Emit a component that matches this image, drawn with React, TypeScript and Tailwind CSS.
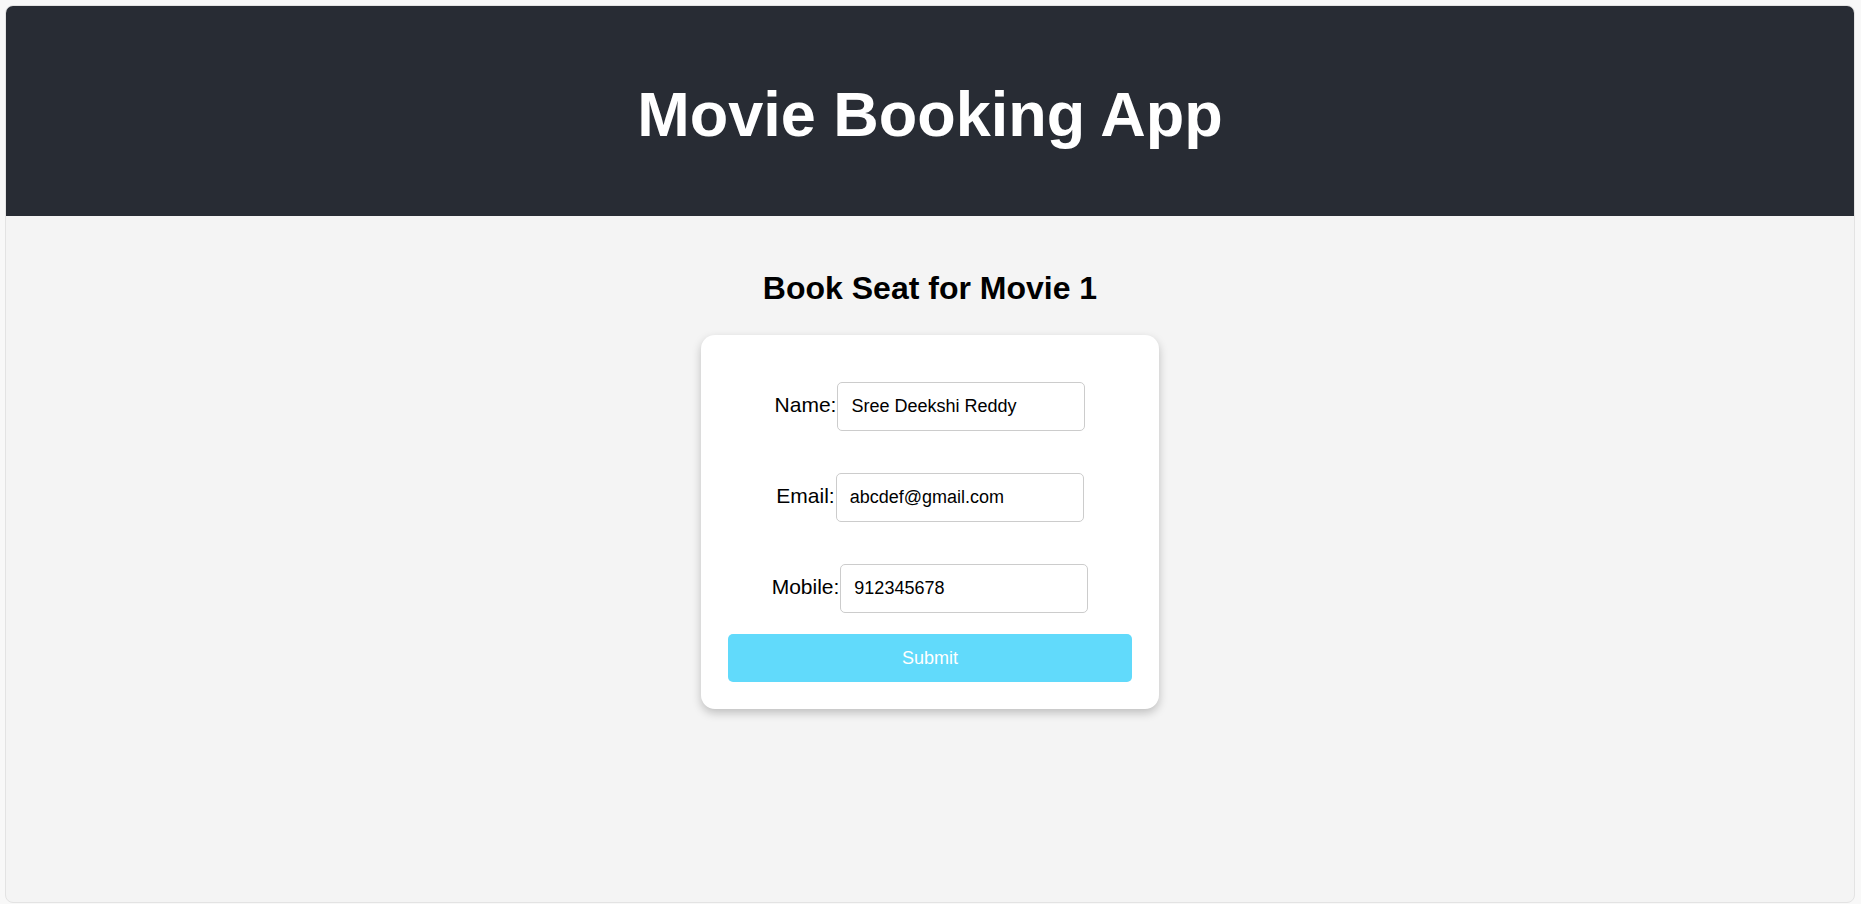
import { useState } from 'react'

export default function App() {
  const [name, setName] = useState('Sree Deekshi Reddy')
  const [email, setEmail] = useState('abcdef@gmail.com')
  const [mobile, setMobile] = useState('912345678')

  return (
    <div className="min-h-screen bg-[#f8f8f8] pt-[5px] pl-[5px] pr-[6px]" style={{ fontFamily: '"Liberation Sans", Arial, sans-serif' }}>
      <div className="h-[898px] rounded-[8px] border border-[#e3e3e3] bg-[#f4f4f4] overflow-hidden">
        <header className="h-[210px] bg-[#282c34] flex items-center justify-center pt-[6px]">
          <h1 className="text-[63px] font-bold text-white leading-none">Movie Booking App</h1>
        </header>

        <main className="flex flex-col items-center">
          <h2 className="mt-[54px] mb-[28px] text-[32px] font-bold text-black leading-[37px]">Book Seat for Movie 1</h2>

          <form
            className="w-[458px] rounded-[14px] bg-white pt-[47px] px-[27px] pb-[27px] shadow-[0_4px_10px_rgba(0,0,0,0.22)] flex flex-col"
            onSubmit={(e) => e.preventDefault()}
          >
            <div className="flex flex-col gap-[42px]">
              <div className="flex items-baseline justify-center">
                <label className="text-[21px] text-black">Name:</label>
                <input
                  value={name}
                  onChange={(e) => setName(e.target.value)}
                  className="ml-[1px] w-[248px] h-[49px] px-[13px] text-[18px] text-black border border-[#cccccc] rounded-[5px] outline-none"
                />
              </div>
              <div className="flex items-baseline justify-center">
                <label className="text-[21px] text-black">Email:</label>
                <input
                  value={email}
                  onChange={(e) => setEmail(e.target.value)}
                  className="ml-[1px] w-[248px] h-[49px] px-[13px] text-[18px] text-black border border-[#cccccc] rounded-[5px] outline-none"
                />
              </div>
              <div className="flex items-baseline justify-center">
                <label className="text-[21px] text-black">Mobile:</label>
                <input
                  value={mobile}
                  onChange={(e) => setMobile(e.target.value)}
                  className="ml-[1px] w-[248px] h-[49px] px-[13px] text-[18px] text-black border border-[#cccccc] rounded-[5px] outline-none"
                />
              </div>
            </div>
            <button
              type="submit"
              className="mt-[21px] h-[48px] w-full rounded-[5px] bg-[#61dafb] text-[18px] text-white"
            >
              Submit
            </button>
          </form>
        </main>
      </div>
    </div>
  )
}
